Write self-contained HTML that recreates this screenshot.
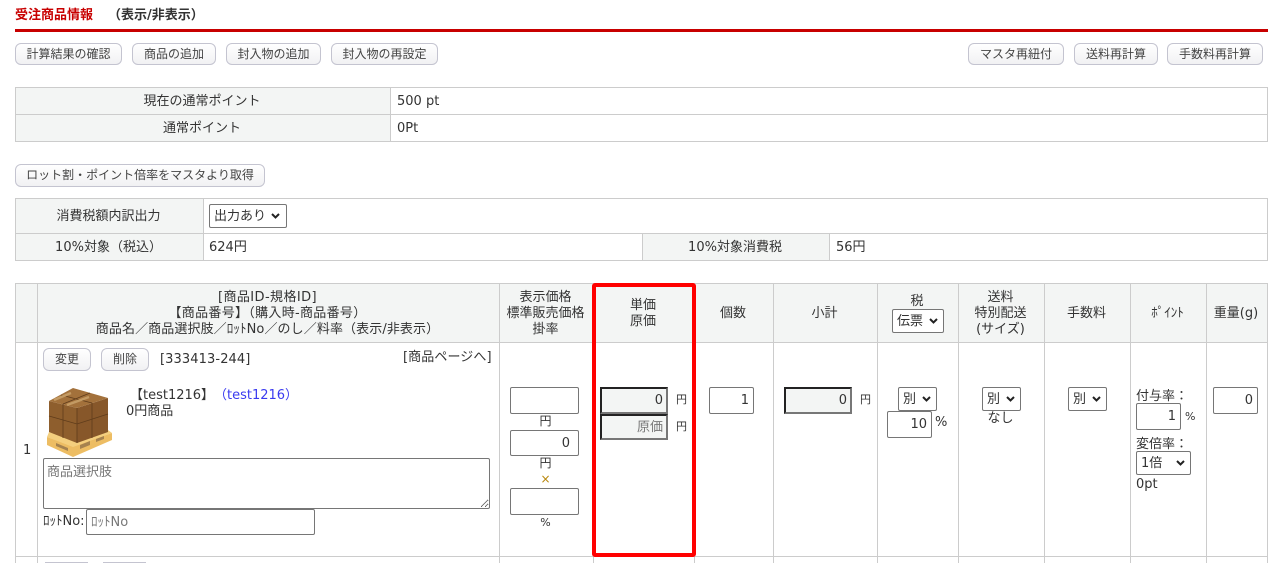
<!DOCTYPE html>
<html lang="ja"><head><meta charset="utf-8"><title>受注商品情報</title>
<style>
html,body{margin:0;padding:0;background:#fff;width:1277px;height:563px;overflow:hidden}
body{position:relative;font:13px/16px "DejaVu Sans","Noto Sans CJK JP",sans-serif;color:#333}
.t,.b,.h,.v,.bx,input,select,textarea,.ch{position:absolute;box-sizing:border-box}
.t{white-space:nowrap;height:16px;margin-top:2px}
.c{text-align:center}
.b{height:22px;border:1px solid #c4c4d0;border-radius:6px;background:linear-gradient(#fff,#f1f1f3);font-size:12px;line-height:20px;text-align:center;color:#444;white-space:nowrap}
.h{height:1px;background:#ccc}
.v{width:1px;background:#ccc}
.bx{background:#f3f5f4}
input,select,textarea{font:13px "DejaVu Sans","Noto Sans CJK JP",sans-serif;color:#333;margin:0;background:#fff;border:1px solid #767676;border-radius:2px}
input{text-align:right;padding:0 8px 0 2px}
input.in{background:#f3f5f4;border:2px solid;border-color:#222 #777 #777 #222;border-radius:0}
select{padding:0 0 0 4px;appearance:none;-webkit-appearance:none}
input::placeholder,textarea::placeholder{color:#777;opacity:1}
.ch{width:9px;height:6px}
</style></head><body>

<div class="t" style="left:15px;top:6px;font-weight:bold;color:#c80000">受注商品情報</div>
<div class="t" style="left:108px;top:6px;font-weight:bold;color:#333">（表示/非表示）</div>
<div class="bx" style="left:15px;top:29px;width:1253px;height:3px;background:#c80000"></div>

<div class="b" style="left:15px;top:43px;width:107px">計算結果の確認</div>
<div class="b" style="left:132px;top:43px;width:84px">商品の追加</div>
<div class="b" style="left:226px;top:43px;width:95px">封入物の追加</div>
<div class="b" style="left:331px;top:43px;width:107px">封入物の再設定</div>
<div class="b" style="left:968px;top:43px;width:96px">マスタ再紐付</div>
<div class="b" style="left:1074px;top:43px;width:84px">送料再計算</div>
<div class="b" style="left:1167px;top:43px;width:96px">手数料再計算</div>

<!-- table 1 -->
<div class="bx" style="left:15px;top:87px;width:375px;height:54px"></div>
<div class="h" style="left:15px;top:87px;width:1253px"></div>
<div class="h" style="left:15px;top:114px;width:1253px"></div>
<div class="h" style="left:15px;top:141px;width:1253px"></div>
<div class="v" style="left:15px;top:87px;height:55px"></div>
<div class="v" style="left:390px;top:87px;height:55px"></div>
<div class="v" style="left:1267px;top:87px;height:55px"></div>
<div class="t c" style="left:15px;width:374px;top:92px">現在の通常ポイント</div>
<div class="t c" style="left:15px;width:374px;top:119px">通常ポイント</div>
<div class="t" style="left:397px;top:92px">500 pt</div>
<div class="t" style="left:397px;top:119px">0Pt</div>

<div class="b" style="left:15px;top:164px;width:250px;height:23px;line-height:21px">ロット割・ポイント倍率をマスタより取得</div>

<!-- table 2 -->
<div class="bx" style="left:15px;top:198px;width:188px;height:62px"></div>
<div class="bx" style="left:642px;top:233px;width:187px;height:27px"></div>
<div class="h" style="left:15px;top:198px;width:1253px"></div>
<div class="h" style="left:15px;top:233px;width:1253px"></div>
<div class="h" style="left:15px;top:260px;width:1253px"></div>
<div class="v" style="left:15px;top:198px;height:63px"></div>
<div class="v" style="left:203px;top:198px;height:63px"></div>
<div class="v" style="left:642px;top:233px;height:28px"></div>
<div class="v" style="left:829px;top:233px;height:28px"></div>
<div class="v" style="left:1267px;top:198px;height:63px"></div>
<div class="t c" style="left:15px;width:187px;top:207px">消費税額内訳出力</div>
<select style="left:209px;top:204px;width:78px;height:24px"><option>出力あり</option></select>
<svg class="ch" style="left:271px;top:213px" viewBox="0 0 9 6"><path d="M1 1L4.5 4.5L8 1" fill="none" stroke="#222" stroke-width="2"/></svg>
<div class="t c" style="left:15px;width:187px;top:238px">10%対象（税込）</div>
<div class="t" style="left:209px;top:238px">624円</div>
<div class="t c" style="left:642px;width:186px;top:238px">10%対象消費税</div>
<div class="t" style="left:836px;top:238px">56円</div>

<!-- table 3 -->
<div class="bx" style="left:15px;top:283px;width:1253px;height:59px"></div>
<div class="h" style="left:15px;top:283px;width:1253px"></div>
<div class="h" style="left:15px;top:342px;width:1253px"></div>
<div class="h" style="left:15px;top:556px;width:1253px"></div>
<div class="v" style="left:15px;top:283px;height:280px"></div>
<div class="v" style="left:37px;top:283px;height:280px"></div>
<div class="v" style="left:499px;top:283px;height:280px"></div>
<div class="v" style="left:593px;top:283px;height:280px"></div>
<div class="v" style="left:694px;top:283px;height:280px"></div>
<div class="v" style="left:773px;top:283px;height:280px"></div>
<div class="v" style="left:877px;top:283px;height:280px"></div>
<div class="v" style="left:958px;top:283px;height:280px"></div>
<div class="v" style="left:1044px;top:283px;height:280px"></div>
<div class="v" style="left:1130px;top:283px;height:280px"></div>
<div class="v" style="left:1206px;top:283px;height:280px"></div>
<div class="v" style="left:1267px;top:283px;height:280px"></div>

<div class="t c" style="left:37px;width:461px;top:288px;letter-spacing:.4px">[商品ID-規格ID]</div>
<div class="t c" style="left:37px;width:461px;top:304px;letter-spacing:.3px">【商品番号】（購入時-商品番号）</div>
<div class="t c" style="left:37px;width:461px;top:320px;letter-spacing:.1px">商品名／商品選択肢／ﾛｯﾄNo／のし／料率（表示/非表示）</div>
<div class="t c" style="left:499px;width:93px;top:288px">表示価格</div>
<div class="t c" style="left:499px;width:93px;top:304px">標準販売価格</div>
<div class="t c" style="left:499px;width:93px;top:320px">掛率</div>
<div class="t c" style="left:593px;width:100px;top:296px">単価</div>
<div class="t c" style="left:593px;width:100px;top:312px">原価</div>
<div class="t c" style="left:694px;width:78px;top:304px">個数</div>
<div class="t c" style="left:773px;width:103px;top:304px">小計</div>
<div class="t c" style="left:877px;width:80px;top:292px">税</div>
<select style="left:892px;top:309px;width:52px;height:24px"><option>伝票</option></select>
<svg class="ch" style="left:929px;top:318px" viewBox="0 0 9 6"><path d="M1 1L4.5 4.5L8 1" fill="none" stroke="#222" stroke-width="2"/></svg>
<div class="t c" style="left:958px;width:85px;top:288px">送料</div>
<div class="t c" style="left:958px;width:85px;top:304px">特別配送</div>
<div class="t c" style="left:958px;width:85px;top:320px">(サイズ)</div>
<div class="t c" style="left:1044px;width:85px;top:304px">手数料</div>
<div class="t c" style="left:1130px;width:75px;top:304px">ﾎﾟｲﾝﾄ</div>
<div class="t c" style="left:1206px;width:60px;top:304px">重量(g)</div>

<div class="t" style="left:23px;top:441px">1</div>
<div class="b" style="left:43px;top:348px;width:48px;height:23px;line-height:21px">変更</div>
<div class="b" style="left:101px;top:348px;width:48px;height:23px;line-height:21px">削除</div>
<div class="t" style="left:160px;top:350px;letter-spacing:.1px">[333413-244]</div>
<div class="t" style="left:403px;top:348px;letter-spacing:.1px">[商品ページへ]</div>

<svg style="position:absolute;left:44px;top:386px" width="70" height="72" viewBox="0 0 70 72">
<path d="M3 51 L29 60 L68 47 L68 54 L29 71 L3 59Z" fill="#edbd63"/>
<path d="M3 51 L29 61 L68 47 L64 44 L33 55 L5 46Z" fill="#f4cf7e"/>
<path d="M12 60l12 5 0-3-12-5zM36 63l10-4 0-4-10 4zM52 56l8-3 0-3-8 3z" fill="#a5824f"/>
<path d="M5 15 L33 22 L33 57 L5 46Z" fill="#8e5e2d"/>
<path d="M33 22 L64 12 L64 46 L33 57Z" fill="#87572a"/>
<path d="M5 15 L29 2 L64 12 L33 22Z" fill="#a3713b"/>
<path d="M5 30 L33 38 L64 28M19 18 L19 52M33 22 L33 57M48 17 L48 52M17 9 L48 17M46 7 L19 18" fill="none" stroke="#5f3c1b" stroke-width=".8"/>
<path d="M10 14 L27 7M23 19 L45 11" stroke="#c39a63" stroke-width="2.5" fill="none"/>
</svg>

<div class="t" style="left:130px;top:386px">【test1216】</div>
<div class="t" style="left:214px;top:386px;color:#3a3af0">（test1216）</div>
<div class="t" style="left:126px;top:402px">0円商品</div>
<textarea placeholder="商品選択肢" style="left:43px;top:458px;width:447px;height:51px;padding:2px 3px"></textarea>
<div class="t" style="left:43px;top:512px">ﾛｯﾄNo:</div>
<input placeholder="ﾛｯﾄNo" style="left:86px;top:509px;width:229px;height:26px;text-align:left;padding:0 4px">

<input style="left:510px;top:387px;width:69px;height:27px">
<div class="t c" style="left:499px;width:93px;top:411px;font-size:12px">円</div>
<input value="0" style="left:510px;top:430px;width:69px;height:26px">
<div class="t c" style="left:499px;width:93px;top:453px;font-size:12px">円</div>
<div class="t c" style="left:499px;width:93px;top:469px;font-size:12px;color:#b8860b">×</div>
<input style="left:510px;top:488px;width:69px;height:27px">
<div class="t c" style="left:499px;width:93px;top:513px;font-size:11px">%</div>

<input class="in" value="0" style="left:600px;top:387px;width:68px;height:27px;padding-right:3px">
<input class="in" placeholder="原価" style="left:600px;top:414px;width:68px;height:26px;padding-right:3px">
<div class="t" style="left:676px;top:390px;font-size:11px">円</div>
<div class="t" style="left:676px;top:417px;font-size:11px">円</div>
<input value="1" style="left:709px;top:387px;width:45px;height:27px;padding-right:4px">
<input class="in" value="0" style="left:784px;top:387px;width:68px;height:27px;padding-right:3px">
<div class="t" style="left:860px;top:390px;font-size:11px">円</div>

<select style="left:898px;top:387px;width:39px;height:24px"><option>別</option></select>
<svg class="ch" style="left:922px;top:396px" viewBox="0 0 9 6"><path d="M1 1L4.5 4.5L8 1" fill="none" stroke="#222" stroke-width="2"/></svg>
<input value="10" style="left:887px;top:411px;width:45px;height:27px;padding-right:4px">
<div class="t" style="left:935px;top:413px">%</div>
<select style="left:982px;top:387px;width:39px;height:24px"><option>別</option></select>
<svg class="ch" style="left:1006px;top:396px" viewBox="0 0 9 6"><path d="M1 1L4.5 4.5L8 1" fill="none" stroke="#222" stroke-width="2"/></svg>
<div class="t c" style="left:958px;width:85px;top:409px">なし</div>
<select style="left:1068px;top:387px;width:39px;height:24px"><option>別</option></select>
<svg class="ch" style="left:1092px;top:396px" viewBox="0 0 9 6"><path d="M1 1L4.5 4.5L8 1" fill="none" stroke="#222" stroke-width="2"/></svg>

<div class="t" style="left:1136px;top:387px">付与率：</div>
<input value="1" style="left:1136px;top:403px;width:45px;height:27px;padding-right:4px">
<div class="t" style="left:1185px;top:407px;font-size:11px">%</div>
<div class="t" style="left:1136px;top:435px">変倍率：</div>
<select style="left:1136px;top:451px;width:55px;height:24px"><option>1倍</option></select>
<svg class="ch" style="left:1176px;top:460px" viewBox="0 0 9 6"><path d="M1 1L4.5 4.5L8 1" fill="none" stroke="#222" stroke-width="2"/></svg>
<div class="t" style="left:1136px;top:475px">0pt</div>
<input value="0" style="left:1213px;top:387px;width:45px;height:27px;padding-right:4px">

<div class="bx" style="left:45px;top:562px;width:43px;height:1px;background:#c4c4d0"></div>
<div class="bx" style="left:103px;top:562px;width:43px;height:1px;background:#c4c4d0"></div>

<div class="bx" style="left:592px;top:283px;width:104px;height:274px;background:transparent;border:4px solid #f00;border-radius:3px"></div>
</body></html>
